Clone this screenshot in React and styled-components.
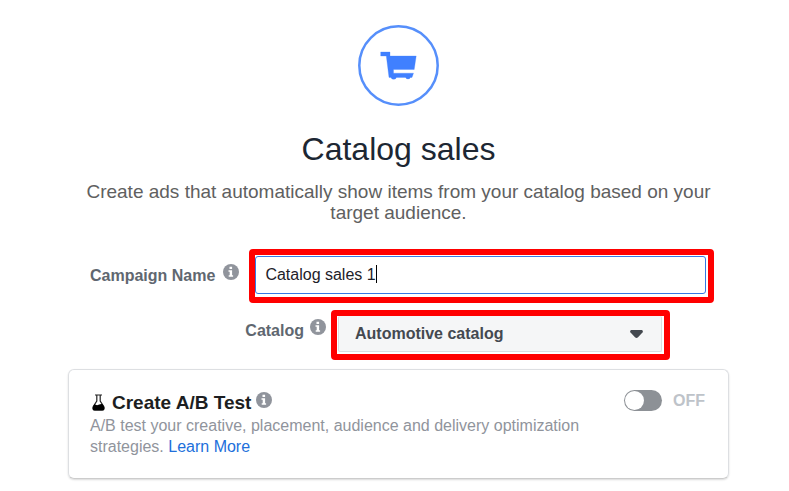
import { useState } from 'react';
import styled, { createGlobalStyle } from 'styled-components';

function InfoIcon() {
  return (
    <InfoSvg viewBox="0 0 16 16" role="img" aria-label="Info">
      <circle cx="8" cy="8" r="8" fill="#90949c" />
      <path d="M6.5 2.800h2.600v2.200H6.500zM5.500 6.200h3.600v5h1v1.600H5.700v-1.600h1V7.800H5.500z" fill="#fff" />
    </InfoSvg>
  );
}

function App() {
  const [name, setName] = useState('Catalog sales 1');
  const [abTest, setAbTest] = useState(false);

  return (
    <Page>
      <GlobalStyle />
      <Header>
        <CartSvg viewBox="0 0 81 81" aria-hidden="true">
          <circle cx="40.5" cy="40.5" r="39.2" fill="none" stroke="#568ffb" strokeWidth="2.5" />
          <path
            d="M22.700 27h9.300v4h26.200l-2 13.500H35.500v3.700H55.500l-1.500 4.200-1.500 0a2.800 2.800 0 0 1-5 0H38.500a3 3 0 0 1-5.600 0H31L28.300 31h-5.600z"
            fill="#4080ff"
            stroke="#4080ff"
            strokeWidth=".3"
          />
        </CartSvg>
        <h1>Catalog sales</h1>
        <p>Create ads that automatically show items from your catalog based on your target audience.</p>
      </Header>

      <NameRow>
        <Label htmlFor="campaignName">Campaign Name</Label>
        <InfoIcon />
        <Highlight $grow>
          <InputBox htmlFor="campaignName">
            <input id="campaignName" value={name} onChange={(e) => setName(e.target.value)} />
            <Caret />
          </InputBox>
        </Highlight>
      </NameRow>

      <CatalogRow>
        <Label htmlFor="catalog">Catalog</Label>
        <InfoIcon />
        <Highlight>
          <SelectBox>
            <select id="catalog">
              <option>Automotive catalog</option>
            </select>
            <svg viewBox="0 0 13 8" aria-hidden="true">
              <path d="M1 0h11q1.500 1 .5 2.500L8 7.300q-1.500 1.200-3 0L.5 2.500Q-.5 1 1 0z" fill="#444950" />
            </svg>
          </SelectBox>
        </Highlight>
      </CatalogRow>

      <Card>
        <CardText>
          <CardTitle>
            <FlaskSvg viewBox="0 0 14 17" aria-hidden="true">
              <path
                d="M3 1h7M4.800 1v6L1.300 12.500Q.3 16 3 16h7q2.700 0 1.700-3.500L8.200 7V1"
                fill="none"
                stroke="#222"
                strokeWidth="1.200"
              />
              <path d="M2.500 10q2 1.800 4 .8t3.800-.8l2 3q.7 3.500-2.300 3.500H3Q0 16.500.8 13z" fill="#000" />
            </FlaskSvg>
            <h2>Create A/B Test</h2>
            <InfoIcon />
          </CardTitle>
          <p>
            A/B test your creative, placement, audience and delivery optimization strategies.{' '}
            <a href="#learn-more">Learn More</a>
          </p>
        </CardText>
        <Toggle>
          <input type="checkbox" checked={abTest} onChange={(e) => setAbTest(e.target.checked)} />
          {abTest ? 'ON' : 'OFF'}
        </Toggle>
      </Card>
    </Page>
  );
}

const GlobalStyle = createGlobalStyle`
  body {
    margin: 0;
    background-color: #fff;
    font-family: 'Liberation Sans', Arial, sans-serif;
  }

  * {
    box-sizing: border-box;
  }

  h1,
  h2,
  p {
    margin: 0;
  }
`;

const Page = styled.main`
  display: flex;
  flex-direction: column;
  padding: 25px 60px 12px 68px;
  font-size: 16px;
  line-height: 21px;
`;

const Header = styled.header`
  display: flex;
  flex-direction: column;
  align-items: center;
  text-align: center;
  padding: 0 16px;

  h1 {
    margin-top: 23px;
    font-size: 32px;
    font-weight: 400;
    line-height: 40px;
    color: #1d2733;
  }

  p {
    margin-top: 12px;
    font-size: 19px;
    color: #606060;
  }
`;

const CartSvg = styled.svg`
  width: 81px;
  height: 81px;
`;

const InfoSvg = styled.svg`
  flex: none;
  width: 16px;
  height: 16px;
`;

const Row = styled.div`
  display: flex;
  align-items: center;
`;

const Label = styled.label`
  padding-bottom: 2px;
  font-weight: 700;
  color: #606770;
  white-space: nowrap;
`;

const NameRow = styled(Row)`
  margin-top: 26px;
  padding: 0 15px 0 22px;

  ${InfoSvg} {
    margin: 0 10px 8px 8px;
  }
`;

const CatalogRow = styled(Row)`
  justify-content: flex-end;
  margin-top: 7px;
  padding-right: 59px;

  ${Label} {
    padding-bottom: 10px;
  }

  ${InfoSvg} {
    margin: 0 5px 16px 6px;
  }
`;

const Highlight = styled.div`
  flex: ${({ $grow }) => ($grow ? '1' : 'none')};
  border: 6px solid #f00;
  border-radius: 4px;
`;

const InputBox = styled.label`
  display: flex;
  align-items: center;
  height: 38px;
  margin: 1px 2px 3px 0;
  padding: 0 0 2px 9px;
  border: 1px solid #3578e5;
  border-radius: 3px;
  cursor: text;

  input {
    field-sizing: content;
    padding: 0;
    border: none;
    outline: none;
    background-color: transparent;
    color: #1d2129;
    font: inherit;
    caret-color: transparent;
  }
`;

const Caret = styled.span`
  width: 1px;
  height: 18px;
  background-color: #000;
`;

const SelectBox = styled.div`
  position: relative;
  padding: 0 2px 2px 1px;

  select {
    display: block;
    appearance: none;
    width: 324px;
    height: 36px;
    padding: 0 40px 0 16px;
    border: 1px solid #dadde1;
    border-top: none;
    border-radius: 2px;
    background-color: #f5f6f7;
    color: #444950;
    font: inherit;
    font-weight: 700;
  }

  svg {
    position: absolute;
    top: 14px;
    right: 21px;
    width: 13px;
    height: 8px;
    pointer-events: none;
  }
`;

const Card = styled.section`
  display: flex;
  justify-content: space-between;
  align-items: flex-start;
  margin-top: 9px;
  padding: 20px 23px 21px 21px;
  border: 1px solid #dddfe2;
  border-bottom-color: #ccc;
  border-radius: 6px;
  box-shadow: 0 1px 2px rgba(0, 0, 0, 0.15);
`;

const CardText = styled.div`
  max-width: 520px;

  p {
    color: #90949c;
  }

  a {
    color: #216fdb;
    text-decoration: none;
  }
`;

const CardTitle = styled.div`
  display: flex;
  align-items: center;
  height: 25px;

  h2 {
    margin-left: 6px;
    font-size: 19px;
    line-height: 25px;
    color: #1c1e21;
  }

  ${InfoSvg} {
    margin: 0 0 6px 5px;
  }
`;

const FlaskSvg = styled.svg`
  width: 14px;
  height: 17px;
  margin-left: 2px;
`;

const Toggle = styled.label`
  display: flex;
  align-items: center;
  gap: 11px;
  font-weight: 700;
  color: #bec3c9;

  input {
    appearance: none;
    display: flex;
    justify-content: flex-start;
    width: 38px;
    height: 21px;
    margin: 0;
    padding: 1px;
    border-radius: 11px;
    background-color: #8d9196;
    cursor: pointer;
  }

  input:checked {
    justify-content: flex-end;
    background-color: #4080ff;
  }

  input::before {
    content: '';
    width: 19px;
    height: 19px;
    border-radius: 50%;
    background-color: #fff;
  }
`;

export default App;
